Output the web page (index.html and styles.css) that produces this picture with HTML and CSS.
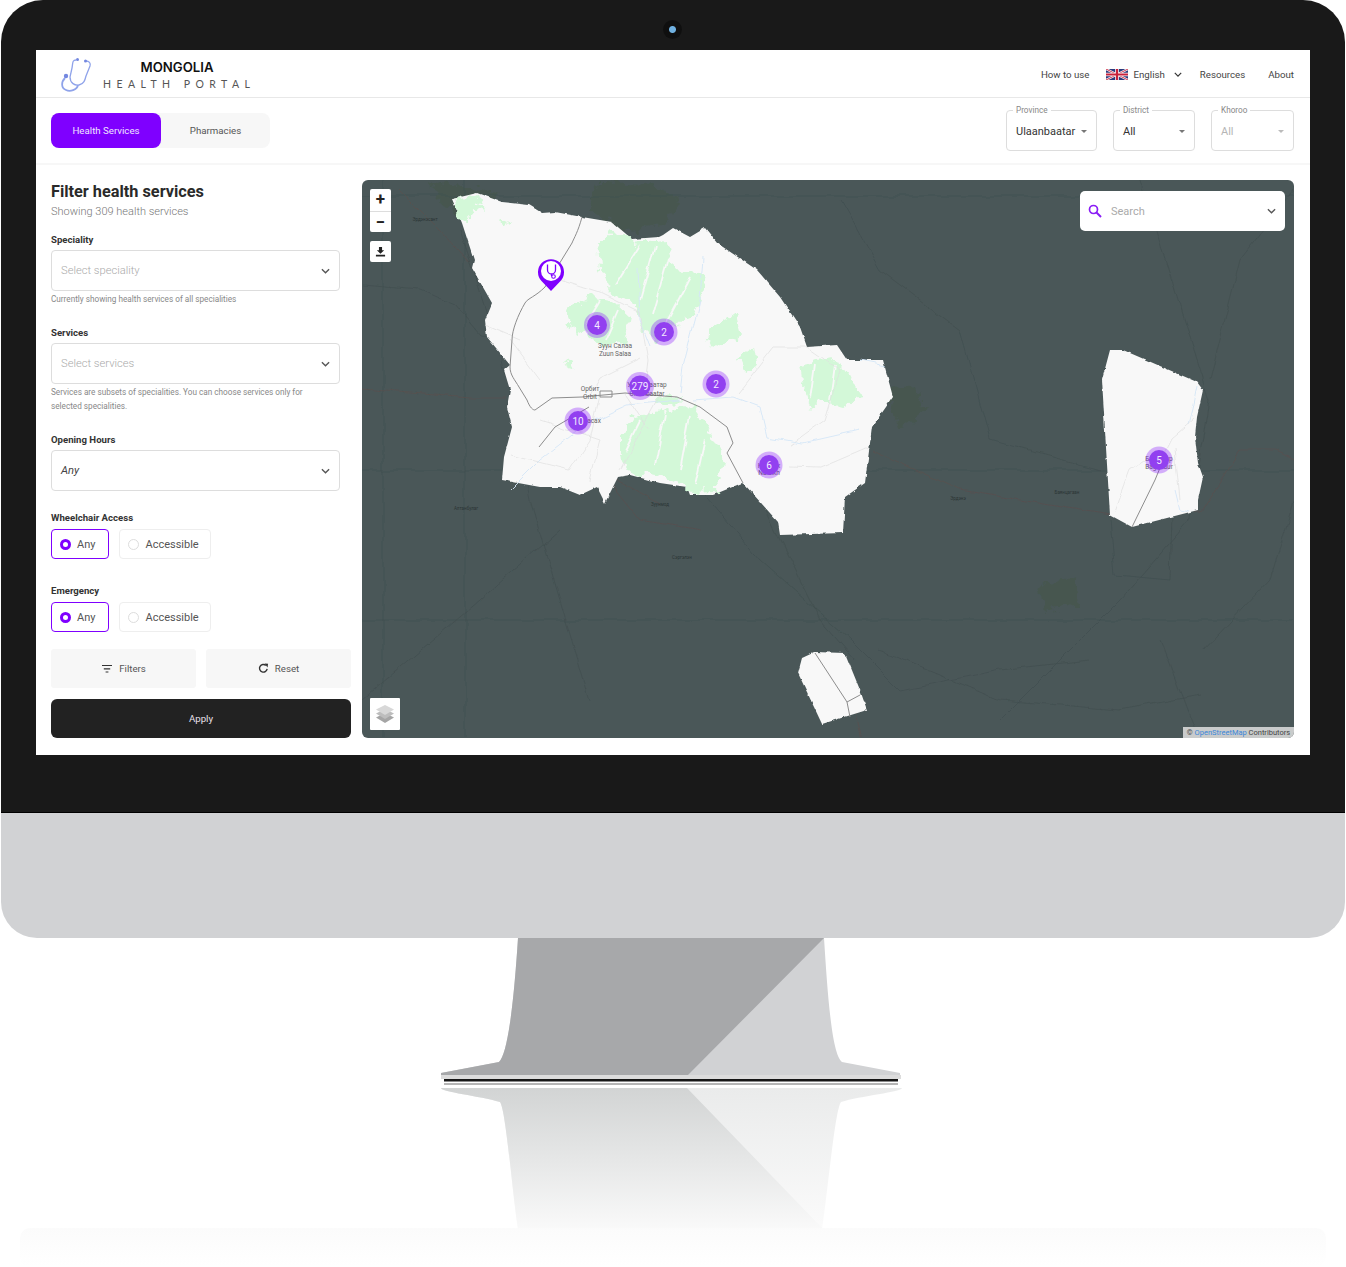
FILE: index.html
```html
<!DOCTYPE html>
<html lang="en">
<head>
    <meta charset="UTF-8">
    <meta name="viewport" content="width=device-width, initial-scale=1.0">
    <title>Mongolia Health Portal</title>
    <link rel="stylesheet" href="styles.css">
</head>
<body>
    <svg class="defs" width="0" height="0">
        <symbol id="chevron" viewBox="0 0 10 6"><path d="M1 1l4 4 4-4" fill="none" stroke="currentColor" stroke-width="1.5"/></symbol>
    </svg>

    <div class="monitor">
        <div class="bezel">
            <span class="camera"></span>
            <div class="screen">
                <header class="topbar">
                    <a class="brand">
                        <svg class="brand-logo" viewBox="60 57 32 36">
                            <path d="M76 60C72 60 73 63 72 68L70 77C70 83 75 86 79 85C84 84 85 80 86 76L90 66C91 63 89 61 86 61" fill="none" stroke="#8fa3ea" stroke-width="1.3"/>
                            <path d="M78 85C77 90 70 92 66 90C61 88 61 82 65 78" fill="none" stroke="#8fa3ea" stroke-width="1.8"/>
                            <circle cx="66" cy="76" r="2.2" fill="#7488e0"/>
                            <circle cx="77.5" cy="59.5" r="1.5" fill="#7488e0"/>
                            <circle cx="85.5" cy="61" r="1.5" fill="#7488e0"/>
                        </svg>
                        <span class="brand-text">
                            <strong>MONGOLIA</strong>
                            <small>HEALTH PORTAL</small>
                        </span>
                    </a>
                    <nav class="nav">
                        <a>How to use</a>
                        <a class="nav-lang">
                            <svg class="flag" viewBox="0 0 60 30">
                                <rect width="60" height="30" fill="#2b3a7d"/>
                                <path d="M0 0L60 30M60 0L0 30" stroke="#fff" stroke-width="6"/>
                                <path d="M0 0L60 30M60 0L0 30" stroke="#c8223c" stroke-width="2.5"/>
                                <path d="M30 0V30M0 15H60" stroke="#fff" stroke-width="10"/>
                                <path d="M30 0V30M0 15H60" stroke="#c8223c" stroke-width="6"/>
                            </svg>
                            English
                            <svg class="nav-chevron"><use href="#chevron"/></svg>
                        </a>
                        <a>Resources</a>
                        <a>About</a>
                    </nav>
                </header>

                <div class="toolbar">
                    <div class="tabs">
                        <button class="tab tab-active">Health Services</button>
                        <button class="tab">Pharmacies</button>
                    </div>
                    <div class="areas">
                        <div class="area area-province"><label>Province</label><span>Ulaanbaatar</span><i class="caret"></i></div>
                        <div class="area area-district"><label>District</label><span>All</span><i class="caret"></i></div>
                        <div class="area area-khoroo area-disabled"><label>Khoroo</label><span>All</span><i class="caret"></i></div>
                    </div>
                </div>

                <main class="main">
                    <aside class="filters">
                        <h2>Filter health services</h2>
                        <p class="count">Showing 309 health services</p>

                        <div class="field">
                            <label class="field-label">Speciality</label>
                            <div class="select"><span class="placeholder">Select speciality</span><svg class="select-chevron"><use href="#chevron"/></svg></div>
                            <p class="help">Currently showing health services of all specialities</p>
                        </div>
                        <div class="field">
                            <label class="field-label">Services</label>
                            <div class="select"><span class="placeholder">Select services</span><svg class="select-chevron"><use href="#chevron"/></svg></div>
                            <p class="help">Services are subsets of specialities. You can choose services only for selected specialities.</p>
                        </div>
                        <div class="field">
                            <label class="field-label">Opening Hours</label>
                            <div class="select"><em>Any</em><svg class="select-chevron"><use href="#chevron"/></svg></div>
                        </div>
                        <div class="field">
                            <label class="field-label">Wheelchair Access</label>
                            <div class="radios">
                                <div class="radio radio-on"><i></i>Any</div>
                                <div class="radio"><i></i>Accessible</div>
                            </div>
                        </div>
                        <div class="field field-emergency">
                            <label class="field-label">Emergency</label>
                            <div class="radios">
                                <div class="radio radio-on"><i></i>Any</div>
                                <div class="radio"><i></i>Accessible</div>
                            </div>
                        </div>

                        <div class="actions">
                            <button class="btn-light">
                                <svg width="12" height="10" viewBox="0 0 12 10"><path d="M1 1.5h10M2.8 4.8h6.4M4.6 8h2.8" stroke="#333" stroke-width="1.2"/></svg>
                                Filters
                            </button>
                            <button class="btn-light">
                                <svg width="11" height="11" viewBox="0 0 12 12"><path d="M10 6.5A4.2 4.2 0 1 1 8.600 2.600" fill="none" stroke="#333" stroke-width="1.5"/><path d="M7.200 0.600L11 0.800 10.400 4.800z" fill="#333"/></svg>
                                Reset
                            </button>
                        </div>
                        <button class="btn-apply">Apply</button>
                    </aside>

                    <section class="map">
                        <svg class="map-canvas" viewBox="362 180 932 558">
                            <defs>
                                <filter id="rough-forest" x="-5%" y="-5%" width="110%" height="110%">
                                    <feTurbulence type="fractalNoise" baseFrequency="0.09" numOctaves="3" seed="4"/>
                                    <feDisplacementMap in="SourceGraphic" scale="16" xChannelSelector="R" yChannelSelector="G"/>
                                </filter>
                                <filter id="rough-line" x="-5%" y="-5%" width="110%" height="110%">
                                    <feTurbulence type="fractalNoise" baseFrequency="0.05" numOctaves="2" seed="9"/>
                                    <feDisplacementMap in="SourceGraphic" scale="7" xChannelSelector="R" yChannelSelector="G"/>
                                </filter>
                                <filter id="rough-edge" x="-5%" y="-5%" width="110%" height="110%">
                                    <feTurbulence type="fractalNoise" baseFrequency="0.14" numOctaves="2" seed="2"/>
                                    <feDisplacementMap in="SourceGraphic" scale="3" xChannelSelector="R" yChannelSelector="G"/>
                                </filter>
                            </defs>
                            <rect x="362" y="180" width="932" height="558" fill="#4a5758"/>

                            <!-- dark area around the selected province -->
                            <g class="dark-green" filter="url(#rough-forest)">
                                <path d="M430 182L470 188 500 194 480 205 455 212 440 200z"/>
                                <path d="M600 182L650 184 680 200 665 225 625 232 590 210z"/>
                                <path d="M885 390L915 385 925 410 900 430z"/>
                                <path d="M1040 585L1075 578 1078 605 1045 612z"/>
                            </g>
                            <g class="dark-road" filter="url(#rough-line)">
                                <path d="M362 285L420 290 455 305 480 335 520 340"/>
                                <path d="M383 180V738M465 180V738"/>
                                <path d="M362 196H1294M362 470H1294M362 620H1294"/>
                                <path d="M840 200L880 270 960 330 990 440 1100 470"/>
                                <path d="M460 230L500 350 530 500 590 700"/>
                                <path d="M700 490L760 560 850 640 900 690 1000 670 1090 660"/>
                                <path d="M760 500L820 620 855 660"/>
                                <path d="M1140 180L1210 400 1190 520 1120 600 1000 720"/>
                                <path d="M1110 520L1115 575 1170 580 1172 515"/>
                                <path d="M1294 190L1240 260 1210 380"/>
                                <path d="M1160 640L1195 730M1205 650L1270 580 1294 500"/>
                                <path d="M880 650L1000 700 1120 710 1200 695"/>
                                <path d="M362 700L480 600 560 530"/>
                            </g>
                            <g class="dark-rail" filter="url(#rough-line)">
                                <path d="M362 389L470 398 505 398"/>
                                <path d="M400 190L440 230 470 262"/>
                                <path d="M872 450L960 490 1110 515 1200 512 1240 450 1275 450 1294 460"/>
                                <path d="M845 660L860 738"/>
                                <path d="M660 505L600 470 640 520 700 530"/>
                            </g>

                            <!-- province land -->
                            <g filter="url(#rough-edge)">
                                <path class="land" d="M452 199L477 193 502 202 529 205 542 213 555 212 582 217 612 222 632 239 659 237 663 235 673 228 690 237 705 228 717 243 757 270 780 297 800 327 807 347 837 345 847 360 883 360 893 397 872 427 865 483 845 497 843 533 780 535 778 522 745 485 742 483 713 495 690 495 687 487 660 483 630 475 618 477 605 503 597 487 580 495 560 487 540 487 502 480 504 457 512 427 507 407 510 390 504 370 510 365 487 337 485 320 492 303 472 268 474 260 462 223z"/>
                                <path class="land" d="M1110 350L1123 350 1197 382 1203 390 1197 417 1195 437 1198 463 1203 477 1198 500 1198 510 1132 527 1110 515 1102 380z"/>
                                <path class="land" d="M798 673L802 658 815 652 845 653 860 690 867 710 822 724z"/>
                            </g>

                            <g class="forest" filter="url(#rough-forest)">
                                <path d="M454 200L477 195 484 212 474 208 468 222 462 221z"/>
                                <path d="M598 243L612 230 633 243 668 240 675 270 700 272 708 285 695 315 672 325 655 345 640 325 635 305 610 290 600 270z"/>
                                <path d="M565 312L590 297 615 302 632 318 626 343 604 345 585 330 575 335z"/>
                                <path d="M620 437L637 415 660 412 690 405 708 430 725 463 715 490 690 491 660 475 630 471 620 453z"/>
                                <path d="M800 365L835 358 862 395 843 406 820 400 810 411 803 387z"/>
                                <path d="M704 335L735 312 738 335 720 348 710 345z"/>
                                <path d="M738 356L755 345 758 365 745 372z"/>
                                <path d="M500 218L510 222 502 230z"/>
                                <path d="M562 359L572 362 569 370z"/>
                                <path d="M655 398L675 396 680 402 660 405z"/>
                            </g>
                            <g class="ridges" filter="url(#rough-line)">
                                <path d="M640 245L615 285M655 245L640 300M668 258L652 315M690 278L665 325"/>
                                <path d="M600 300L585 325M618 310L605 340"/>
                                <path d="M640 420L625 450M665 415L655 465M690 415L680 470M705 440L695 485"/>
                                <path d="M815 365L810 400M835 365L830 400"/>
                            </g>

                            <g class="river" filter="url(#rough-line)">
                                <path d="M703 257L700 300 683 367 680 393"/>
                                <path d="M693 400L733 397 760 407 767 437 803 443 860 430"/>
                                <path d="M510 490L540 460 585 425 628 405 680 400"/>
                                <path d="M1197 385L1192 410 1188 425"/>
                                <path d="M1175 490L1180 510 1190 512"/>
                                <path d="M638 268L640 320 650 345"/>
                                <path d="M860 360L885 365"/>
                            </g>
                            <g class="road-light" filter="url(#rough-line)">
                                <path d="M560 280L600 293 640 313 648 360 645 385"/>
                                <path d="M737 393L773 347 807 347 840 370 825 420 790 445"/>
                                <path d="M790 467L820 468 867 448"/>
                                <path d="M600 395L590 440 570 470 510 455"/>
                                <path d="M625 393L650 430M660 395L620 470"/>
                                <path d="M510 340L540 380M485 325L520 340"/>
                                <path d="M540 420L600 440 590 480"/>
                                <path d="M640 358L600 378 590 395"/>
                                <path d="M1115 512L1130 470 1145 460M1193 420L1170 440 1155 470M1175 450L1180 500"/>
                            </g>
                            <g class="road-main">
                                <path d="M582 217C578 232 574 238 572 243L545 287C535 297 528 298 525 303C518 315 512 330 512 340L510 367C510 375 515 380 519 387L527 400C530 408 533 410 535 410L552 398 582 397 625 393 677 397 700 407 727 427 733 443 727 453 743 483"/>
                                <path d="M539 447L555 427 589 407"/>
                                <path d="M1132 527L1155 480 1162 463"/>
                                <path d="M815 653L847 702 860 695M847 702L850 717"/>
                                <path d="M600 397H612V391H600z"/>
                            </g>

                            <g class="map-label-land">
                                <text x="615" y="348">Зуун Салаа</text>
                                <text x="615" y="356">Zuun Salaa</text>
                                <text x="590" y="391">Орбит</text>
                                <text x="590" y="399">Orbit</text>
                                <text x="647" y="387">Улаанбаатар</text>
                                <text x="647" y="396">Ulaanbaatar</text>
                                <text x="592" y="423">Хасах</text>
                                <text x="769" y="468">Налайх</text>
                                <text x="769" y="475">Nalaikh</text>
                                <text x="1159" y="461">Багануур</text>
                                <text x="1159" y="469">Baganuur</text>
                            </g>
                            <g class="map-label-dark">
                                <text x="425" y="221">Эрдэнэсант</text>
                                <text x="660" y="506">Зуунмод</text>
                                <text x="682" y="559">Сэргэлэн</text>
                                <text x="466" y="510">Алтанбулаг</text>
                                <text x="958" y="500">Эрдэнэ</text>
                                <text x="1067" y="494">Баянцагаан</text>
                            </g>

                            <g class="cluster"><circle class="halo" cx="597" cy="325" r="13"/><circle class="core" cx="597" cy="325" r="10"/><text x="597" y="329">4</text></g>
                            <g class="cluster"><circle class="halo" cx="664" cy="332" r="13.5"/><circle class="core" cx="664" cy="332" r="10"/><text x="664" y="336">2</text></g>
                            <g class="cluster"><circle class="halo" cx="640" cy="386" r="14"/><circle class="core" cx="640" cy="386" r="10.5"/><text x="640" y="390">279</text></g>
                            <g class="cluster"><circle class="halo" cx="716" cy="384" r="13.5"/><circle class="core" cx="716" cy="384" r="10"/><text x="716" y="388">2</text></g>
                            <g class="cluster"><circle class="halo" cx="578" cy="421" r="13.5"/><circle class="core" cx="578" cy="421" r="10"/><text x="578" y="425">10</text></g>
                            <g class="cluster"><circle class="halo" cx="769" cy="465" r="13.5"/><circle class="core" cx="769" cy="465" r="10"/><text x="769" y="469">6</text></g>
                            <g class="cluster"><circle class="halo" cx="1159" cy="460" r="13.5"/><circle class="core" cx="1159" cy="460" r="10"/><text x="1159" y="464">5</text></g>

                            <g class="pin">
                                <path d="M551 291L541.500 281A13 13 0 1 1 560.500 281z" fill="#7f00ff"/>
                                <circle cx="551" cy="271" r="10" fill="#fff"/>
                                <path d="M547.500 264.500V270A4 4 0 0 0 555.500 270V264.500M551.500 274V276" fill="none" stroke="#7f00ff" stroke-width="1.300"/>
                                <circle cx="553.500" cy="276.500" r="1.800" fill="none" stroke="#7f00ff" stroke-width="1.100"/>
                            </g>
                        </svg>

                        <div class="map-ctrl map-zoom"><span>+</span><span>−</span></div>
                        <div class="map-ctrl map-download">
                            <svg width="11" height="11" viewBox="0 0 12 12"><path d="M4.300 1h3.400v3.600H10L6 8.400 2 4.600h2.300z M1 9.500h10V11.500H1z" fill="#222"/></svg>
                        </div>
                        <div class="map-layers">
                            <svg width="20" height="22" viewBox="0 0 20 22">
                                <path d="M10 10L19 14.500 10 20 1 14.500z" fill="#a5a5a5"/>
                                <path d="M10 6L19 10.500 10 16 1 10.500z" fill="#bdbdbd"/>
                                <path d="M10 2L19 6.500 10 12 1 6.500z" fill="#d8d8d8"/>
                            </svg>
                        </div>
                        <div class="map-search">
                            <svg width="14" height="14" viewBox="0 0 14 14"><circle cx="5.500" cy="5.500" r="4" fill="none" stroke="#8a1cf5" stroke-width="1.700"/><path d="M8.500 8.500L13 13" stroke="#8a1cf5" stroke-width="1.900"/></svg>
                            <span>Search</span>
                            <svg class="select-chevron"><use href="#chevron"/></svg>
                        </div>
                        <div class="map-credit">© <a>OpenStreetMap</a> Contributors</div>
                    </section>
                </main>
            </div>
        </div>
        <div class="chin"></div>
    </div>

    <svg class="stand" viewBox="0 938 1346 329">
        <defs>
            <linearGradient id="fade" x1="0" y1="1088" x2="0" y2="1232" gradientUnits="userSpaceOnUse">
                <stop offset="0" stop-color="#d2d4d4"/>
                <stop offset="1" stop-color="#fafafa"/>
            </linearGradient>
            <linearGradient id="fade-light" x1="0" y1="1088" x2="0" y2="1232" gradientUnits="userSpaceOnUse">
                <stop offset="0" stop-color="#eaebeb"/>
                <stop offset="1" stop-color="#fbfbfb"/>
            </linearGradient>
            <linearGradient id="floor" x1="0" y1="1228" x2="0" y2="1267" gradientUnits="userSpaceOnUse">
                <stop offset="0" stop-color="#fbfbfb"/>
                <stop offset="1" stop-color="#fff"/>
            </linearGradient>
        </defs>
        <rect x="20" y="1228" width="1306" height="39" rx="10" fill="url(#floor)"/>
        <!-- reflection -->
        <path d="M687 1088H902C902 1092 860 1096 841 1102C835 1110 828 1190 822 1230H518C512 1190 506 1110 500 1102C480 1096 441 1092 441 1088z" fill="url(#fade-light)"/>
        <path d="M687 1088L822 1228H518C512 1190 506 1110 500 1102C480 1096 441 1092 441 1088z" fill="url(#fade)"/>
        <!-- neck and base -->
        <path d="M518 938H824C828 1000 832 1054 842 1062L900 1073V1076H441V1073L499 1062C508 1054 514 1000 518 938z" fill="#d1d2d4"/>
        <path d="M518 938H824L687 1076H441V1073L499 1062C508 1054 514 1000 518 938z" fill="#a7a8aa"/>
        <rect x="441" y="1075" width="460" height="4" fill="#dcdcdc"/>
        <rect x="444" y="1079" width="454" height="2.500" fill="#161616"/>
        <rect x="444" y="1083" width="454" height="2" fill="#b5b5b5"/>
    </svg>
</body>
</html>
```

FILE: styles.css
```css
* {
    box-sizing: border-box;
}
html, body {
    margin: 0;
    padding: 0;
    background: #fff;
}
body {
    width: 1346px;
    height: 1267px;
    overflow: hidden;
    font-family: Roboto, "Liberation Sans", sans-serif;
    color: #333;
}
button {
    font-family: inherit;
    border: none;
    cursor: pointer;
}
.defs {
    position: absolute;
}

/* monitor */
.monitor {
    margin: 0 1px;
}
.bezel {
    position: relative;
    height: 813px;
    padding: 50px 35px 0;
    background: #191919;
    border-bottom: 1px solid #000;
    border-radius: 42px 42px 0 0;
}
.camera {
    position: absolute;
    left: 662px;
    top: 20px;
    width: 19px;
    height: 19px;
    border-radius: 50%;
    background: radial-gradient(circle, #6fb0e0 0 3px, #0f0f0f 4px);
}
.chin {
    height: 125px;
    background: #d1d2d4;
    border-radius: 0 0 36px 36px;
}
.stand {
    display: block;
    width: 1346px;
    height: 329px;
}
.screen {
    height: 705px;
    background: #fff;
}

/* top bar */
.topbar {
    display: flex;
    align-items: center;
    justify-content: space-between;
    height: 48px;
    padding: 0 16px 0 24px;
    border-bottom: 1px solid #e8e8e8;
}
.brand {
    display: flex;
    align-items: center;
    gap: 11px;
}
.brand-logo {
    width: 32px;
    height: 36px;
    margin-top: 3px;
}
.brand-text {
    display: flex;
    flex-direction: column;
    width: 152px;
    margin-top: 4px;
    text-align: center;
}
.brand-text strong {
    padding-right: 4px;
    font-family: Inter, sans-serif;
    font-size: 13.2px;
    line-height: 16px;
    font-weight: 600;
    color: #111;
}
.brand-text small {
    margin-top: 2px;
    font-family: Lato, sans-serif;
    font-size: 10.5px;
    line-height: 15px;
    letter-spacing: 5.45px;
    white-space: nowrap;
    color: #555;
}
.nav {
    display: flex;
    align-items: center;
    gap: 23px;
    padding-top: 1px;
    font-size: 9.7px;
    color: #444;
}
.nav-lang {
    display: flex;
    align-items: center;
    margin-left: -6px;
    margin-right: -5px;
}
.flag {
    width: 22px;
    height: 11px;
    margin-right: 5px;
}
.nav-chevron {
    width: 8px;
    height: 5px;
    margin-left: 9px;
    color: #333;
}

/* tabs and area selects */
.toolbar {
    display: flex;
    align-items: center;
    justify-content: space-between;
    height: 67px;
    padding: 2px 16px 2px 15px;
    border-bottom: 2px solid #f7f7f7;
}
.tabs {
    display: flex;
    width: 219px;
    height: 35px;
    background: #f7f7f7;
    border-radius: 8px;
}
.tab {
    flex: 1;
    padding: 0;
    font-size: 9.7px;
    color: #555;
    background: none;
    border-radius: 8px;
}
.tab-active {
    flex: 0 0 110px;
    color: #f0e4ff;
    background: #7f00ff;
}
.areas {
    display: flex;
    gap: 16px;
}
.area {
    position: relative;
    display: flex;
    align-items: center;
    justify-content: space-between;
    height: 41px;
    padding: 1px 9px 0;
    font-size: 11px;
    color: #333;
    border: 1px solid #ddd;
    border-radius: 4px;
}
.area-province {
    width: 91px;
}
.area-district {
    width: 82px;
}
.area-khoroo {
    width: 83px;
}
.area label {
    position: absolute;
    left: 6px;
    top: -6px;
    padding: 0 3px;
    font-size: 8.2px;
    line-height: 10px;
    color: #888;
    background: #fff;
}
.area-disabled span {
    color: #b5b5b5;
}
.area-disabled .caret {
    border-top-color: #bbb;
}
.caret {
    width: 0;
    height: 0;
    border: 3.5px solid transparent;
    border-top-color: #777;
    border-bottom: none;
}

/* filter column */
.main {
    display: flex;
    gap: 11px;
    padding: 15px 16px 0 15px;
}
.filters {
    width: 300px;
    flex: none;
}
.filters h2 {
    margin: 1px 0 0;
    font-size: 16.3px;
    line-height: 22px;
    font-weight: 700;
    color: #2a2a2a;
}
.count {
    margin: 1px 0 12px;
    font-size: 11px;
    line-height: 16px;
    font-weight: 300;
    color: #777;
}
.field {
    margin-bottom: 19px;
}
.field-emergency {
    margin-top: 24px;
    margin-bottom: 17px;
}
.field-label {
    display: block;
    margin-bottom: 3px;
    font-size: 9.6px;
    line-height: 15px;
    font-weight: 700;
    color: #333;
}
.select {
    display: flex;
    align-items: center;
    justify-content: space-between;
    width: 289px;
    height: 41px;
    padding: 0 9px;
    font-size: 11.2px;
    color: #444;
    border: 1px solid #ddd;
    border-radius: 4px;
}
.placeholder {
    color: #aaa;
    font-weight: 300;
}
.select-chevron {
    width: 9px;
    height: 6px;
    color: #555;
}
.help {
    max-width: 262px;
    margin: 1px 0 0;
    font-size: 8.2px;
    line-height: 14px;
    color: #888;
}
.radios {
    display: flex;
    gap: 10px;
    margin-top: 4px;
}
.radio {
    display: flex;
    align-items: center;
    gap: 6px;
    height: 30px;
    padding: 0 11px 0 8px;
    font-size: 11px;
    color: #555;
    border: 1px solid #eee;
    border-radius: 4px;
}
.radio i {
    width: 11px;
    height: 11px;
    background: #fff;
    border: 1px solid #ddd;
    border-radius: 50%;
}
.radio-on {
    padding-right: 13px;
    border-color: #7f00ff;
}
.radio-on i {
    border: 3.5px solid #7f00ff;
}
.actions {
    display: flex;
    gap: 10px;
    margin-bottom: 11px;
}
.btn-light {
    display: flex;
    flex: 1;
    align-items: center;
    justify-content: center;
    gap: 6px;
    height: 39px;
    font-size: 9.7px;
    color: #555;
    background: #f7f7f7;
    border-radius: 3px;
}
.btn-apply {
    display: block;
    width: 100%;
    height: 39px;
    font-size: 9.7px;
    color: #e8e0ea;
    background: #222;
    border-radius: 6px;
}

/* map */
.map {
    position: relative;
    width: 932px;
    height: 558px;
    flex: none;
    border-radius: 6px;
    overflow: hidden;
}
.map-canvas {
    display: block;
    width: 932px;
    height: 558px;
}
.land {
    fill: #f8f8f8;
}
.forest path {
    fill: #d3f8d8;
}
.dark-green path {
    fill: #46574f;
}
.dark-road path,
.dark-rail path,
.river path,
.road-light path,
.road-main path,
.ridges path {
    fill: none;
}
.dark-road path {
    stroke: #414e4f;
    stroke-width: 0.7;
}
.dark-rail path {
    stroke: #5a4f4d;
    stroke-width: 0.7;
}
.ridges path {
    stroke: #f8f8f8;
    stroke-width: 1.8;
}
.river path {
    stroke: #d5e6f7;
    stroke-width: 0.9;
}
.road-light path {
    stroke: #e0e0e0;
    stroke-width: 0.7;
}
.road-main path {
    stroke: #8d8d8d;
    stroke-width: 1;
}
.map-label-land text {
    font-size: 6.5px;
    text-anchor: middle;
    fill: #666;
}
.map-label-dark text {
    font-size: 4.5px;
    text-anchor: middle;
    fill: #2b3535;
}
.cluster .halo {
    fill: #7f00ff;
    fill-opacity: 0.3;
}
.cluster .core {
    fill: #9240f0;
}
.cluster text {
    font-size: 10px;
    text-anchor: middle;
    fill: #f3eaff;
}
.map-ctrl {
    position: absolute;
    left: 8px;
    width: 21px;
    background: #fff;
    border-radius: 2px;
}
.map-zoom {
    top: 9px;
    height: 43px;
    font-size: 17px;
    font-weight: 700;
    color: #222;
    text-align: center;
}
.map-zoom span {
    display: block;
    height: 21.5px;
    line-height: 21px;
}
.map-zoom span + span {
    border-top: 1px solid #ddd;
}
.map-download {
    display: flex;
    align-items: center;
    justify-content: center;
    top: 61px;
    height: 21px;
}
.map-layers {
    position: absolute;
    left: 8px;
    top: 518px;
    display: flex;
    align-items: center;
    justify-content: center;
    width: 30px;
    height: 32px;
    background: #fff;
    border-radius: 1px;
}
.map-search {
    position: absolute;
    right: 9px;
    top: 11px;
    display: flex;
    align-items: center;
    width: 205px;
    height: 40px;
    padding: 0 9px 0 8px;
    font-size: 11px;
    color: #aaa;
    background: #fff;
    border-radius: 5px;
}
.map-search span {
    flex: 1;
    margin-left: 9px;
}
.map-credit {
    position: absolute;
    right: 0;
    bottom: 0;
    width: 111px;
    height: 11px;
    font-size: 7.5px;
    line-height: 11px;
    text-align: center;
    white-space: nowrap;
    color: #444;
    background: #c9cbcb;
}
.map-credit a {
    color: #3a86d8;
}
```
